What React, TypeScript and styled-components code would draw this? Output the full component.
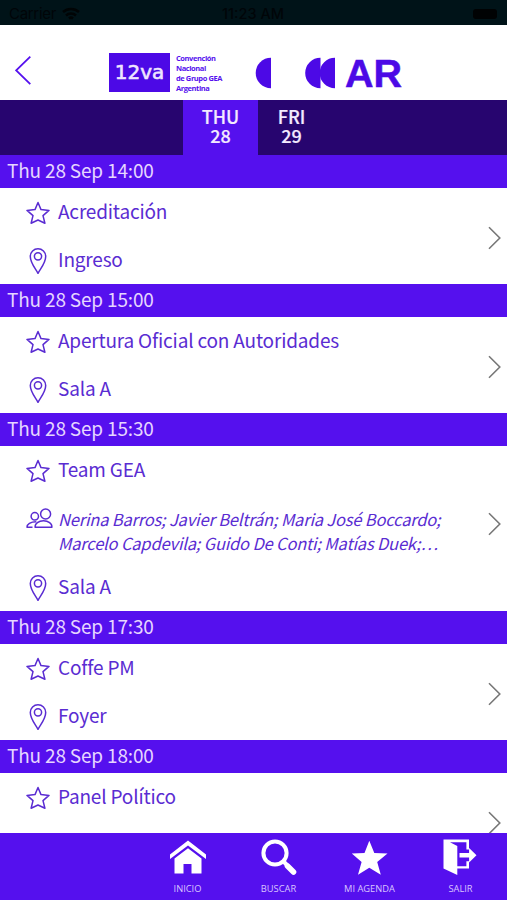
import React from "react";
import styled, { createGlobalStyle } from "styled-components";

const violet = "#5510ee";
const ink = "#5a2cd2";
const sans = `"Noto Sans CJK JP", "Noto Sans", sans-serif`;

const GlobalStyle = createGlobalStyle`
  * { box-sizing: border-box; }
  body { margin: 0; background: #fff; }
`;

const Screen = styled.div`
  width: 507px;
  height: 900px;
  display: flex;
  flex-direction: column;
  overflow: hidden;
  background: #fff;
  font-family: ${sans};
`;

const StatusBar = styled.div`
  flex: none;
  height: 25px;
  padding: 3px 10px 0 9px;
  display: grid;
  grid-template-columns: 1fr auto 1fr;
  align-items: center;
  background: #001318;
  color: #000508;
  font: 15px/20px "Inter", sans-serif;
`;

const Carrier = styled.div`
  display: flex;
  align-items: center;
  gap: 6px;
  letter-spacing: -0.3px;
`;

const Clock = styled.div`
  font-weight: 500;
  font-size: 14.5px;
`;

const Battery = styled.div`
  justify-self: end;
  width: 24px;
  height: 10px;
  border-radius: 3px;
  background: #000203;
`;

const Header = styled.header`
  flex: none;
  height: 75px;
  display: flex;
  align-items: flex-start;
  padding: 28px 0 0 15px;
`;

const BackIcon = styled.svg`
  margin: 3px 77px 0 0;
`;

const Badge = styled.div`
  width: 61px;
  height: 39px;
  background: #4c09e6;
  color: #efe5ff;
  font: 20px/38px "DejaVu Sans", sans-serif;
  -webkit-text-stroke: 0.6px #efe5ff;
  text-align: center;
`;

const Tagline = styled.div`
  width: 79px;
  padding: 1px 0 0 6px;
  color: ${violet};
  font: 700 7.5px/9.9px "Open Sans", sans-serif;
  letter-spacing: -0.42px;
  white-space: nowrap;
`;

const Shapes = styled.svg`
  margin-top: 4px;
`;

const Country = styled.div`
  margin: 0 0 0 9px;
  color: #4c09e6;
  font: 700 39.5px/40px "Liberation Sans", sans-serif;
  -webkit-text-stroke: 0.5px #4c09e6;
`;

const DayTabs = styled.nav`
  flex: none;
  height: 55px;
  display: flex;
  padding-left: 183px;
  background: #27056f;
`;

const DayTab = styled.div<{ $active?: boolean; $width: number }>`
  width: ${(p) => p.$width}px;
  padding-top: 7px;
  background: ${(p) => (p.$active ? violet : "transparent")};
  color: #f3eaff;
  font-size: 18px;
  font-weight: 500;
  line-height: 19px;
  text-align: center;
  -webkit-text-stroke: 0.2px #f3eaff;
`;

const List = styled.main`
  flex: 1;
  min-height: 0;
  overflow: hidden;
`;

const TimeBar = styled.h2`
  height: 33px;
  margin: 0;
  padding-left: 7px;
  background: ${violet};
  color: #e6d6ff;
  font-size: 19px;
  font-weight: 400;
  line-height: 29px;
  letter-spacing: -0.17px;
`;

const Session = styled.article`
  display: flex;
  justify-content: space-between;
  padding: 0 6px 0 26px;
`;

const Details = styled.div`
  width: 440px;
`;

const Row = styled.div<{ $tall?: boolean }>`
  height: ${(p) => (p.$tall ? 69 : 48)}px;
  display: grid;
  grid-template-columns: 32px 1fr;
  align-items: ${(p) => (p.$tall ? "start" : "center")};
  padding-top: ${(p) => (p.$tall ? 14 : 1)}px;
`;

const Label = styled.div`
  padding-bottom: 3px;
  color: ${ink};
  font-size: 19px;
  line-height: 24px;
  letter-spacing: -0.18px;
  white-space: nowrap;
`;

const Speakers = styled.div`
  color: ${ink};
  font-size: 16.5px;
  font-style: italic;
  line-height: 23.5px;
  letter-spacing: -0.19px;
  white-space: nowrap;
`;

const Arrow = styled.svg<{ $top: number }>`
  flex: none;
  margin-top: ${(p) => p.$top}px;
`;

const Footer = styled.footer`
  flex: none;
  height: 67px;
  display: flex;
  padding-left: 142px;
  background: ${violet};
`;

const NavItem = styled.div`
  width: 91px;
  display: flex;
  flex-direction: column;
  align-items: center;
  padding-top: 5px;
  gap: 6px;
  color: #d9c5ff;
  font: 9.3px/13px "Open Sans", sans-serif;
`;

const Line = { fill: "none", stroke: ink, strokeWidth: 1.5, strokeLinejoin: "round" as const };

const StarIcon = () => (
  <svg width="24" height="26" viewBox="0 0 24 26" {...Line}>
    <path d="M12 2.5 15 9.6l8 .8-6 5.2 1.9 7.6L12 20l-6.9 3.2L7 15.6l-6-5.2 8-.8z" />
  </svg>
);

const PinIcon = () => (
  <svg width="24" height="28" viewBox="0 0 24 28" {...Line}>
    <path d="M12 26.3C9.5 21.5 4.3 16 4.3 9.5a7.7 7.7 0 0 1 15.4 0C19.7 16 14.5 21.5 12 26.3z" />
    <circle cx="12" cy="9.3" r="3.6" />
  </svg>
);

const PeopleIcon = () => (
  <svg width="28" height="22" viewBox="0 0 28 22" {...Line}>
    <circle cx="19.6" cy="6" r="5" />
    <circle cx="8.8" cy="8.3" r="3.7" />
    <path d="M9.2 19.3C8.500 15.500 13 12.800 17.500 12.800S26.500 15.500 25.800 19.300z" />
    <path d="M6.5 19.300H1C.8 16 4.500 13.800 10.300 13.800" />
  </svg>
);

const HomeIcon = () => (
  <svg width="38" height="38" viewBox="0 0 38 38" fill="#fff">
    <path d="M19 2.500 1 16.500V21L19 7.500 37 21v-4.500z" />
    <path d="M19 10.300 5.500 20.500v15h9v-9.500h8v9.500h10V20.500z" />
  </svg>
);

const SearchIcon = () => (
  <svg width="38" height="38" viewBox="0 0 38 38" fill="none" stroke="#fff">
    <circle cx="15" cy="15" r="11.600" strokeWidth="4" />
    <path d="m23 23 4 4" strokeWidth="4" />
    <path d="m27.500 28 6 6" strokeWidth="5.600" strokeLinecap="round" />
  </svg>
);

const AgendaIcon = () => (
  <svg width="38" height="38" viewBox="0 0 38 38" fill="#fff">
    <path d="m18.300 2.800 5 12.300 13.200.300-10.300 8.600 3.600 12.800-11.500-7.100-11.300 7.100 3.600-12.800L.800 15.400l12.700-.300z" />
  </svg>
);

const ExitIcon = () => (
  <svg width="38" height="38" viewBox="0 0 38 38" fill="#fff">
    <path d="M1.500 1.500H27v10h-2.600V4.300H8L15.300 8v20.300h9.100v-5H27v7.300H15.300V37L1.500 30.500z" />
    <path d="M17.500 15h9.600v-5l7.400 7.200-7.400 7.200v-5h-9.600z" />
  </svg>
);

type Item = { time: string; title: string; place?: string; speakers?: string[] };

const sessions: Item[] = [
  { time: "Thu 28 Sep 14:00", title: "Acreditación", place: "Ingreso" },
  { time: "Thu 28 Sep 15:00", title: "Apertura Oficial con Autoridades", place: "Sala A" },
  {
    time: "Thu 28 Sep 15:30",
    title: "Team GEA",
    place: "Sala A",
    speakers: [
      "Nerina Barros; Javier Beltrán; Maria José Boccardo;",
      "Marcelo Capdevila; Guido De Conti; Matías Duek;…",
    ],
  },
  { time: "Thu 28 Sep 17:30", title: "Coffe PM", place: "Foyer" },
  { time: "Thu 28 Sep 18:00", title: "Panel Político" },
];

const nav = [
  { label: "INICIO", Icon: HomeIcon },
  { label: "BUSCAR", Icon: SearchIcon },
  { label: "MI AGENDA", Icon: AgendaIcon },
  { label: "SALIR", Icon: ExitIcon },
];

export default function App() {
  return (
    <Screen>
      <GlobalStyle />
      <StatusBar>
        <Carrier>
          Carrier
          <svg width="18" height="14" viewBox="0 0 18 14" fill="none" stroke="#000405" strokeWidth="2.5">
            <path d="M1 5a12 12 0 0 1 16 0M4 8.500a7.500 7.500 0 0 1 10 0M7 11.500a3 3 0 0 1 4 0" />
          </svg>
        </Carrier>
        <Clock>11:23 AM</Clock>
        <Battery />
      </StatusBar>
      <Header>
        <BackIcon width="17" height="29" viewBox="0 0 17 29" fill="none" stroke={violet} strokeWidth="1.8">
          <path d="M15.300.700 1.200 14.300l14.100 13.900" />
        </BackIcon>
        <Badge>12va</Badge>
        <Tagline>
          Convención
          <br />
          Nacional
          <br />
          de Grupo GEA
          <br />
          Argentina
        </Tagline>
        <Shapes width="87" height="32" viewBox="0 0 87 32" fill="#4c09e6">
          <path d="M22 .7v30.600A15.300 15.300 0 0 1 22 .7z" />
          <path d="M71.500.7v30.600a15.300 15.300 0 0 1 0-30.600z" />
          <path d="M86 .7v30.600a15.300 15.300 0 0 1 0-30.600z" />
        </Shapes>
        <Country>AR</Country>
      </Header>
      <DayTabs>
        <DayTab $active $width={75}>
          THU
          <br />
          28
        </DayTab>
        <DayTab $width={67}>
          FRI
          <br />
          29
        </DayTab>
      </DayTabs>
      <List>
        {sessions.map((s) => (
          <section key={s.time}>
            <TimeBar>{s.time}</TimeBar>
            <Session>
              <Details>
                <Row>
                  <StarIcon />
                  <Label>{s.title}</Label>
                </Row>
                {s.speakers && (
                  <Row $tall>
                    <PeopleIcon />
                    <Speakers>
                      {s.speakers.map((line) => (
                        <div key={line}>{line}</div>
                      ))}
                    </Speakers>
                  </Row>
                )}
                <Row>
                  <PinIcon />
                  {s.place && <Label>{s.place}</Label>}
                </Row>
              </Details>
              <Arrow
                $top={s.speakers ? 66 : 38}
                width="13"
                height="24"
                viewBox="0 0 13 24"
                fill="none"
                stroke="#777"
                strokeWidth="1.6"
              >
                <path d="M1 1.200 11.800 12 1 22.800" />
              </Arrow>
            </Session>
          </section>
        ))}
      </List>
      <Footer>
        {nav.map(({ label, Icon }) => (
          <NavItem key={label}>
            <Icon />
            {label}
          </NavItem>
        ))}
      </Footer>
    </Screen>
  );
}
